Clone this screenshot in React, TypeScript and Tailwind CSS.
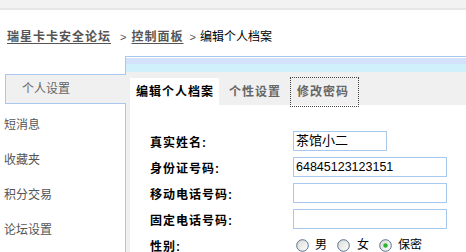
import React from "react";

const sideItems = ["短消息", "收藏夹", "积分交易", "论坛设置"];

function Radio({ checked }: { checked?: boolean }) {
  return (
    <svg width="13" height="13" viewBox="0 0 13 13" className="shrink-0">
      <defs>
        <linearGradient id={checked ? "rg1" : "rg0"} x1="0" y1="0" x2="1" y2="1">
          <stop offset="0" stopColor="#d9d9d4" />
          <stop offset="1" stopColor="#ffffff" />
        </linearGradient>
      </defs>
      <circle cx="6.5" cy="6.5" r="5.8" fill={`url(#${checked ? "rg1" : "rg0"})`} stroke="#55718f" strokeWidth="1" />
      {checked && <circle cx="6.5" cy="6.5" r="2.2" fill="#2bb52b" />}
    </svg>
  );
}

function FieldRow({ label, children }: { label: string; children: React.ReactNode }) {
  return (
    <div className="flex h-[26px] items-center">
      <div className="w-[143px] shrink-0 pt-[4px] text-[12px] font-bold tracking-[1px] text-black">{label}</div>
      {children}
    </div>
  );
}

export default function App() {
  return (
    <div className="h-[252px] w-[466px] overflow-hidden bg-white font-['Liberation_Sans','Noto_Sans_CJK_SC',sans-serif]">
      <div className="h-[10px] border-b-2 border-[#e6e6e6] bg-[#f2f2f2]" />

      {/* breadcrumb */}
      <div className="mt-[19px] flex h-[16px] items-center pl-[7px] text-[12px] leading-[16px]">
        <a className="font-bold tracking-[1px] text-[#555] underline underline-offset-2">瑞星卡卡安全论坛</a>
        <span className="ml-[9px] mr-[5px] text-[11px] text-[#555]">&gt;</span>
        <a className="font-bold tracking-[1px] text-[#555] underline underline-offset-2">控制面板</a>
        <span className="ml-[6px] mr-[4px] text-[11px] text-[#555]">&gt;</span>
        <span className="text-black">编辑个人档案</span>
      </div>

      <div className="mt-[11px] flex w-[466px]">
        {/* sidebar */}
        <div className="w-[126px] shrink-0 border-r border-[#a8c8ee] pt-[18px]">
          <div className="ml-[5px] mr-[-1px] flex h-[30px] items-center border-y border-l border-[#a8c8ee] bg-[#f0f0f0] pl-[16px] text-[12px] text-[#666]">
            个人设置
          </div>
          <div className="mt-[3px]">
            {sideItems.map((item) => (
              <div key={item} className="flex h-[35px] items-center pl-[4px] text-[12px] text-[#555]">
                {item}
              </div>
            ))}
          </div>
        </div>

        {/* main panel */}
        <div className="w-[340px] shrink-0 border-t border-[#a8c8ee]">
          <div className="h-px bg-white" />
          <div className="h-[6px] bg-[#d4e2fc]" />
          <div className="h-[8px] bg-[#d0f0fc]" />
          <div className="bg-[#f0f0f0] pl-[4px] pt-[6px]">
            <div className="flex h-[27px] items-start text-[12px] font-bold tracking-[1px]">
              <div className="flex h-[27px] w-[89px] items-center bg-white pl-[6px] text-black">编辑个人档案</div>
              <div className="ml-[10px] flex h-[27px] items-center text-[#666]">个性设置</div>
              <div className="ml-[10px] flex h-[28px] w-[67px] items-center pl-[6px] text-[#666] outline outline-1 outline-dotted outline-[#444]">
                修改密码
              </div>
            </div>
            <div className="bg-white pb-[20px] pl-[20px] pt-[23px]">
              <FieldRow label="真实姓名:">
                <div className="flex h-[20px] w-[94px] shrink-0 items-center border border-[#a8c8ee] pl-[2px] text-[13px] text-black">茶馆小二</div>
              </FieldRow>
              <FieldRow label="身份证号码:">
                <div className="flex h-[20px] w-[154px] shrink-0 items-center border border-[#a8c8ee] pl-[2px] text-[12.5px] text-black">64845123123151</div>
              </FieldRow>
              <FieldRow label="移动电话号码:">
                <div className="h-[20px] w-[154px] shrink-0 border border-[#a8c8ee]" />
              </FieldRow>
              <FieldRow label="固定电话号码:">
                <div className="h-[20px] w-[154px] shrink-0 border border-[#a8c8ee]" />
              </FieldRow>
              <FieldRow label="性别:">
                <div className="flex items-center pl-[3px] text-[12px] text-black">
                  <Radio />
                  <span className="ml-[6px]">男</span>
                  <span className="ml-[10px]"><Radio /></span>
                  <span className="ml-[7px]">女</span>
                  <span className="ml-[10px]"><Radio checked /></span>
                  <span className="ml-[6px]">保密</span>
                </div>
              </FieldRow>
            </div>
          </div>
        </div>
      </div>
    </div>
  );
}
